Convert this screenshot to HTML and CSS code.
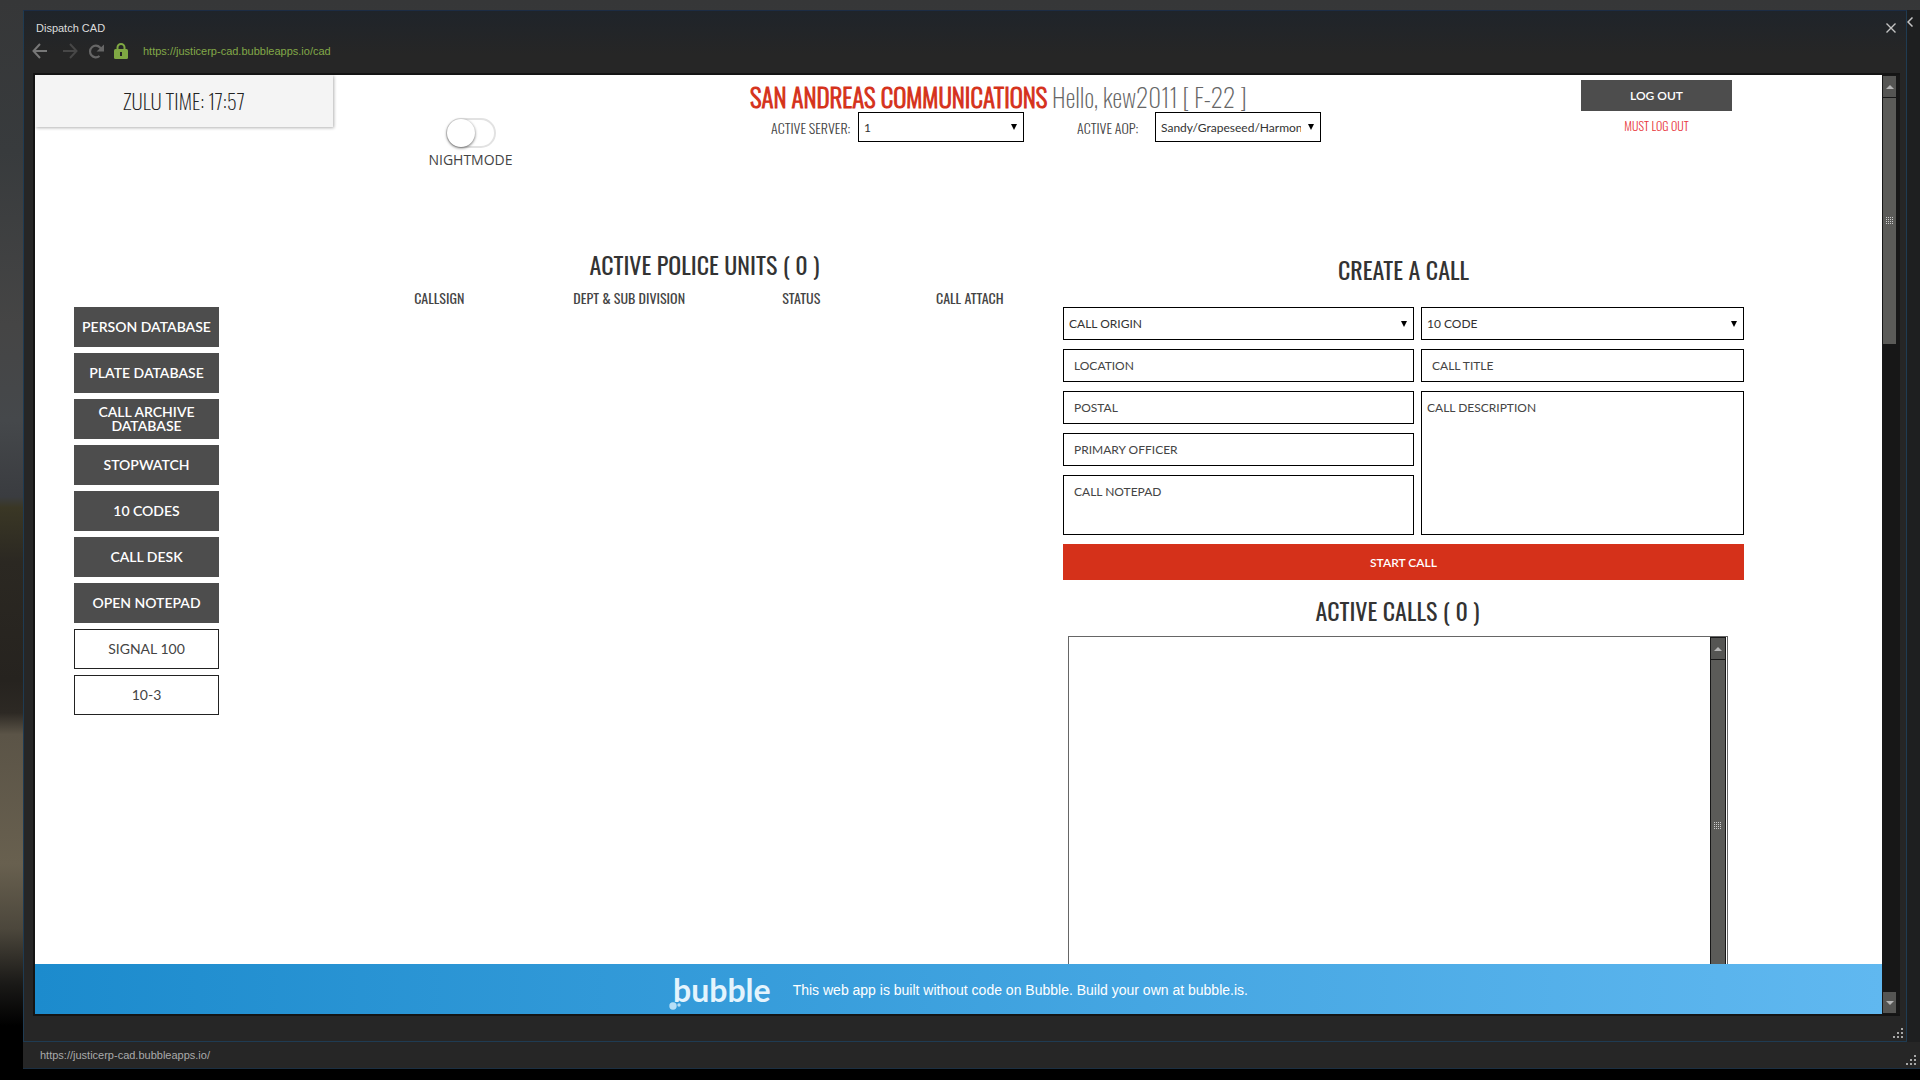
FILE: index.html
```html
<!DOCTYPE html>
<html lang="en">
<head>
  <meta charset="UTF-8">
  <meta name="viewport" content="width=device-width, initial-scale=1.0">
  <title>Dispatch CAD</title>
  <link rel="stylesheet" href="styles.css">
</head>
<body>
  <div class="back-window">
    <div class="back-row">
      <section class="window">
        <header class="window-top">
          <div class="title-bar">
            <span class="window-title">Dispatch CAD</span>
            <button class="icon-btn" aria-label="Close">
              <svg width="10" height="10" viewBox="0 0 10 10"><path d="M0.5 0.5L9.5 9.5M9.5 0.5L0.5 9.5" stroke="#c4c4c4" stroke-width="1.4"/></svg>
            </button>
          </div>
          <nav class="nav-bar">
            <button class="icon-btn" aria-label="Back">
              <svg width="16" height="16" viewBox="0 0 16 16" fill="none" stroke="#777" stroke-width="2"><path d="M15 8H1.5M8 1L1.5 8L8 15"/></svg>
            </button>
            <button class="icon-btn forward" aria-label="Forward">
              <svg width="16" height="16" viewBox="0 0 16 16" fill="none" stroke="#474747" stroke-width="2"><path d="M1 8H14.5M8 1L14.5 8L8 15"/></svg>
            </button>
            <button class="icon-btn" aria-label="Reload">
              <svg width="16" height="16" viewBox="0 0 16 16"><path d="M11.500 13A5.800 5.800 0 1 1 12 4.500L13 6" fill="none" stroke="#666" stroke-width="2.2"/><path d="M16 1.500V8.500H8.500Z" fill="#666"/></svg>
            </button>
            <svg class="lock" width="14" height="16" viewBox="0 0 14 16"><path d="M3.5 7V4.500A3.500 3.500 0 0 1 10.500 4.500V7" fill="none" stroke="#7fa843" stroke-width="2"/><rect y="6" width="14" height="10" rx="1.500" fill="#7fa843"/><path d="M6 9H8V13H6Z" fill="#262626"/></svg>
            <a class="url" href="#">https://justicerp-cad.bubbleapps.io/cad</a>
          </nav>
        </header>

        <div class="viewport">
          <div class="page">
            <main class="app">
              <div class="top">
                <div class="zulu">ZULU TIME: 17:57</div>
                <div class="nightmode">
                  <input type="checkbox" id="nightmode">
                  <label for="nightmode">NIGHTMODE</label>
                </div>
                <div class="greeting">
                  <h1><strong>SAN ANDREAS COMMUNICATIONS</strong> <span>Hello, kew2011 [ F-22 ]</span></h1>
                  <div class="servers">
                    <label class="server-label" for="server">ACTIVE SERVER:</label>
                    <select id="server"><option>1</option></select>
                    <label class="aop-label" for="aop">ACTIVE AOP:</label>
                    <select id="aop"><option>Sandy/Grapeseed/Harmony</option></select>
                  </div>
                </div>
                <div class="logout">
                  <button>LOG OUT</button>
                  <span>MUST LOG OUT</span>
                </div>
              </div>

              <div class="columns">
                <aside class="sidebar">
                  <button>PERSON DATABASE</button>
                  <button>PLATE DATABASE</button>
                  <button>CALL ARCHIVE DATABASE</button>
                  <button>STOPWATCH</button>
                  <button>10 CODES</button>
                  <button>CALL DESK</button>
                  <button>OPEN NOTEPAD</button>
                  <button class="outline">SIGNAL 100</button>
                  <button class="outline">10-3</button>
                </aside>

                <section class="units">
                  <h2>ACTIVE POLICE UNITS ( 0 )</h2>
                  <table>
                    <thead>
                      <tr>
                        <th class="col-callsign">CALLSIGN</th>
                        <th class="col-dept">DEPT &amp; SUB DIVISION</th>
                        <th class="col-status">STATUS</th>
                        <th>CALL ATTACH</th>
                      </tr>
                    </thead>
                  </table>
                </section>

                <section class="calls">
                  <h2>CREATE A CALL</h2>
                  <form class="call-form">
                    <select aria-label="Call origin"><option>CALL ORIGIN</option></select>
                    <select aria-label="10 code"><option>10 CODE</option></select>
                    <input type="text" placeholder="LOCATION" aria-label="Location">
                    <input type="text" placeholder="CALL TITLE" aria-label="Call title">
                    <input type="text" placeholder="POSTAL" aria-label="Postal">
                    <textarea class="description" placeholder="CALL DESCRIPTION" aria-label="Call description"></textarea>
                    <input type="text" placeholder="PRIMARY OFFICER" aria-label="Primary officer">
                    <textarea placeholder="CALL NOTEPAD" aria-label="Call notepad"></textarea>
                    <button type="button" class="start">START CALL</button>
                  </form>
                  <h2 class="active-title">ACTIVE CALLS ( 0 )</h2>
                  <div class="call-list">
                    <div class="scrollbar inner">
                      <button aria-label="Scroll up"><svg width="8" height="4"><path d="M0 4L4 0L8 4Z" fill="#b5b5b5"/></svg></button>
                      <div class="thumb fill"><i class="dots"></i></div>
                      <button aria-label="Scroll down"><svg width="8" height="4"><path d="M0 0L4 4L8 0Z" fill="#b5b5b5"/></svg></button>
                    </div>
                  </div>
                </section>
              </div>
            </main>

            <footer class="banner">
              <span class="logo">
                <span class="logo-text">bubble</span>
                <svg class="logo-dots" width="12" height="10" viewBox="0 0 12 10"><circle cx="4" cy="6" r="3.700" fill="#b7dff7"/><circle cx="10" cy="5" r="1.700" fill="#b7dff7"/></svg>
              </span>
              <span>This web app is built without code on Bubble. Build your own at bubble.is.</span>
            </footer>
          </div>
          <div class="scrollbar">
            <button aria-label="Scroll up"><svg width="8" height="4"><path d="M0 4L4 0L8 4Z" fill="#b5b5b5"/></svg></button>
            <div class="thumb"><i class="dots"></i></div>
            <button class="down" aria-label="Scroll down"><svg width="8" height="4"><path d="M0 0L4 4L8 0Z" fill="#b5b5b5"/></svg></button>
          </div>
        </div>

        <div class="grip-row">
          <svg width="10" height="10" viewBox="0 0 10 10" fill="#a8a8a8"><path d="M8 0h2v2h-2zM4 4h2v2h-2zM8 4h2v2h-2zM0 8h2v2h-2zM4 8h2v2h-2zM8 8h2v2h-2z"/></svg>
        </div>
      </section>
      <div class="back-edge">
        <svg width="6" height="10" viewBox="0 0 6 10"><path d="M5.500 0.500L1 5L5.500 9.500" fill="none" stroke="#c4c4c4" stroke-width="1.500"/></svg>
      </div>
    </div>
    <footer class="status-bar">
      <span>https://justicerp-cad.bubbleapps.io/</span>
      <svg width="10" height="10" viewBox="0 0 10 10" fill="#a8a8a8"><path d="M8 0h2v2h-2zM4 4h2v2h-2zM8 4h2v2h-2zM0 8h2v2h-2zM4 8h2v2h-2zM8 8h2v2h-2z"/></svg>
    </footer>
  </div>
</body>
</html>
```

FILE: styles.css
```css
* {
  box-sizing: border-box;
}
body {
  margin: 0;
  height: 100vh;
  display: flex;
  padding: 10px 0 11px 23px;
  overflow: hidden;
  font-family: "Liberation Sans", Arial, sans-serif;
  background: linear-gradient(#363738 0, #383b3d 14%, #454545 30%, #45484b 39%, #3a3c40 46%, #3a3725 47%, #2b2822 52%, #26231f 63%, #2d2924 66%, #5b5447 68%, #68604f 80%, #4c473c 86%, #1b1a18 91%, #000 95%);
}
button, input, select, textarea {
  font-family: Lato, sans-serif;
  border-radius: 0;
  margin: 0;
}
button {
  cursor: pointer;
}
h1, h2 {
  margin: 0;
  font-weight: normal;
}

/* window frames */
.back-window {
  flex: 1;
  min-width: 0;
  display: flex;
  flex-direction: column;
  background: #262626;
  border-bottom: 1px solid #1b2f42;
}
.back-row {
  flex: 1;
  min-height: 0;
  display: flex;
}
.window {
  flex: 1;
  min-width: 0;
  display: flex;
  flex-direction: column;
  border: 1px solid #1f3b52;
  border-top-color: #1c2c44;
  background: #262626;
}
.back-edge {
  width: 13px;
  padding-top: 7px;
  background: #1e1f20;
}
.back-edge svg {
  display: block;
}
.window-top {
  height: 62px;
  background: linear-gradient(#1f242a, #262626 70%);
}
.title-bar {
  display: flex;
  justify-content: space-between;
  align-items: center;
  height: 32px;
  padding: 2px 10px 0 12px;
}
.window-title {
  font-size: 11px;
  color: #ddd;
}
.icon-btn {
  display: flex;
  padding: 0;
  border: none;
  background: none;
}
.nav-bar {
  display: flex;
  align-items: center;
  padding-left: 8px;
  gap: 10px;
}
.nav-bar .forward {
  margin-left: 4px;
}
.url {
  margin-left: 5px;
  font-size: 11px;
  color: #82a848;
  text-decoration: none;
}
.viewport {
  flex: 1;
  min-height: 0;
  display: flex;
  margin: 0 6px 0 9px;
  border: 2px solid #141414;
  border-right: none;
}
.grip-row {
  height: 25px;
  display: flex;
  justify-content: flex-end;
  align-items: flex-end;
  padding: 0 3px 3px 0;
}
.status-bar {
  height: 26px;
  display: flex;
  justify-content: space-between;
  align-items: center;
  padding: 0 4px 0 17px;
  font-size: 11px;
  color: #aaa;
}
.status-bar svg {
  align-self: flex-end;
  margin-bottom: 3px;
}

/* scrollbars */
.scrollbar {
  width: 18px;
  display: flex;
  flex-direction: column;
  padding: 1px 4px 1px 1px;
  background: #171717;
}
.scrollbar button {
  height: 21px;
  display: flex;
  justify-content: center;
  align-items: center;
  padding: 0;
  border: none;
  background: #555553;
}
.scrollbar .down {
  margin-top: auto;
}
.thumb {
  height: 246px;
  margin: 1px 0;
  display: flex;
  justify-content: center;
  align-items: center;
  background: #5b5b58;
}
.fill {
  flex: 1;
}
.dots {
  width: 8px;
  height: 8px;
  background: conic-gradient(transparent 75%, #ccc 0) 0 0 / 2px 2px;
}
.inner {
  width: 16px;
  padding: 1px;
}

/* page */
.page {
  flex: 1;
  min-width: 0;
  display: flex;
  flex-direction: column;
  background: #fff;
}
.app {
  flex: 1;
  min-height: 0;
  overflow: hidden;
}
.top {
  display: grid;
  grid-template-columns: 298px 275px minmax(0, 1fr) 151px;
  align-items: start;
  height: 170px;
  padding-right: 150px;
}
.zulu, h1, h2, th, .servers label, .logout span {
  font-family: Oswald, "Liberation Sans Narrow", sans-serif;
}
.zulu {
  height: 52px;
  line-height: 52px;
  text-align: center;
  font-size: 21px;
  font-weight: 200;
  color: #222;
  background: #f4f4f4;
  box-shadow: 1px 1px 3px rgba(0, 0, 0, 0.3);
}
.nightmode {
  display: flex;
  flex-direction: column;
  align-items: center;
  padding-top: 43px;
}
.nightmode input {
  appearance: none;
  width: 50px;
  height: 30px;
  margin: 0;
  border: 2px solid #e2e2e2;
  border-radius: 15px;
  background: #fff;
}
.nightmode input::before {
  content: "";
  display: block;
  width: 28px;
  height: 28px;
  margin: -1px;
  border-radius: 50%;
  background: #fff;
  box-shadow: 0 1px 3px rgba(0, 0, 0, 0.6);
}
.nightmode label {
  font-family: "Open Sans", sans-serif;
  font-size: 14px;
  line-height: 24px;
  color: #444;
}
.greeting {
  padding: 6px 0 0 142px;
}
h1 {
  font-size: 25px;
  font-weight: 200;
  line-height: 31px;
  white-space: nowrap;
  color: #666;
}
h1 strong {
  font-weight: 300;
  color: #d5311a;
  -webkit-text-stroke: 1px #d5311a;
}
.servers {
  display: flex;
  align-items: center;
  padding-left: 21px;
  font-size: 14px;
  font-weight: 300;
  color: #444;
}
.servers label {
  white-space: nowrap;
}
.server-label {
  width: 87px;
}
.aop-label {
  width: 78px;
  margin-left: 53px;
}
select {
  appearance: none;
  padding: 0 19px 0 5px;
  border: 1px solid #000;
  font-size: 12px;
  color: #333;
  background: #fff url("data:image/svg+xml,%3Csvg xmlns='http://www.w3.org/2000/svg' width='6' height='6'%3E%3Cpath d='M0 0H6L3 6Z'/%3E%3C/svg%3E") no-repeat right 6px center;
}
.servers select {
  width: 166px;
  height: 30px;
}
.logout {
  display: flex;
  flex-direction: column;
  align-items: center;
  gap: 5px;
  padding-top: 5px;
}
.logout button {
  width: 100%;
  height: 31px;
  border: none;
  font-size: 12px;
  font-weight: 600;
  color: #fff;
  background: #4d4d4d;
}
.logout span {
  font-size: 12px;
  font-weight: 300;
  line-height: 20px;
  color: #e8373c;
}
.columns {
  display: grid;
  grid-template-columns: 145px minmax(0, 844fr) minmax(0, 681fr);
  padding: 0 138px 0 39px;
}

/* sidebar */
.sidebar {
  display: flex;
  flex-direction: column;
  gap: 6px;
  padding-top: 62px;
}
.sidebar button {
  height: 40px;
  padding: 0 5px;
  border: none;
  font-size: 14px;
  font-weight: 600;
  line-height: 14px;
  color: #fff;
  background: #4d4d4d;
}
.sidebar .outline {
  border: 1px solid #222;
  font-weight: 400;
  color: #444;
  background: #fff;
}

/* units */
h2 {
  font-size: 24px;
  line-height: 38px;
  text-align: center;
  color: #333;
}
.units {
  margin-left: 127px;
}
table {
  width: 100%;
  margin-top: 2px;
  table-layout: fixed;
  border-collapse: collapse;
}
th {
  padding: 0;
  font-size: 14px;
  font-weight: normal;
  line-height: 26px;
  color: #444;
}
.col-callsign {
  width: 26%;
}
.col-dept {
  width: 27%;
}
.col-status {
  width: 21%;
}

/* calls */
.calls {
  padding-top: 5px;
}
.call-form {
  display: grid;
  grid-template-columns: 351fr 323fr;
  grid-template-rows: 33px 33px 33px 33px 60px 36px;
  gap: 9px 7px;
  padding-top: 19px;
}
.call-form input, .call-form textarea {
  min-width: 0;
  padding: 0 10px;
  border: 1px solid #000;
  font-size: 12px;
  background: #fff;
}
.call-form textarea {
  padding: 8px 10px;
  resize: none;
}
.call-form .description {
  grid-column: 2;
  grid-row: 3 / 6;
  padding-left: 5px;
}
.call-form ::placeholder {
  color: #444;
}
.start {
  grid-column: 1 / 3;
  border: none;
  font-size: 12px;
  font-weight: 600;
  color: #fff;
  background: #d5311a;
}
.active-title {
  margin-top: 11px;
  padding-right: 12px;
}
.call-list {
  display: flex;
  justify-content: flex-end;
  height: 380px;
  margin: 7px 16px 0 5px;
  padding-right: 1px;
  border: 1px solid #666;
}

/* bubble banner */
.banner {
  height: 50px;
  display: flex;
  justify-content: center;
  align-items: center;
  gap: 22px;
  padding-top: 2px;
  font-size: 14px;
  color: #fff;
  background: linear-gradient(to right, #1c8bcd, #60b8f0);
}
.logo {
  position: relative;
  padding-left: 4px;
}
.logo-text {
  font-family: Lato, sans-serif;
  font-size: 32px;
  font-weight: 700;
  line-height: 40px;
  color: #e4f4fd;
}
.logo-dots {
  position: absolute;
  left: 0;
  bottom: 0;
}
```
